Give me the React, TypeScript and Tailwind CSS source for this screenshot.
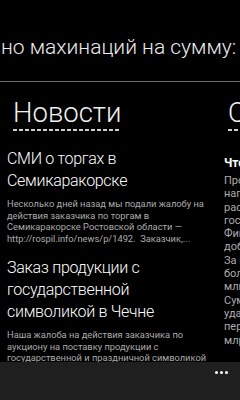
import React from "react";

const leftBody1 = [
  "Несколько дней назад мы подали жалобу на",
  "действия заказчика по торгам в",
  "Семикаракорске Ростовской области —",
  "http://rospil.info/news/p/1492.  Заказчик,...",
];
const leftBody2 = [
  "Наша жалоба на действия заказчика по",
  "аукциону на поставку продукции с",
  "государственной и праздничной символикой",
];
const rightLines = [
  "Прокуратура",
  "направила",
  "расходов",
  "государственных",
  "Финансов",
  "добились",
  "За последние",
  "более",
  "млн",
  "Сумма",
  "удалось",
  "перечислено",
  "млрд",
];

export default function App() {
  return (
    <div
      className="relative w-[240px] h-[400px] overflow-hidden bg-black text-white"
      style={{ fontFamily: 'Roboto, "Open Sans", sans-serif' }}
    >
      <div className="h-[81px] pt-[33px]">
        <div className="whitespace-nowrap text-[21px] leading-[28px] font-light text-[#ececec] ml-[1px]">
          но махинаций на сумму:
        </div>
      </div>
      <div className="h-px bg-[#6e6e6e]" />
      <div className="flex">
        <div className="w-[224px] shrink-0">
          <div className="ml-[13px] mt-[17px] w-max">
            <div className="text-[27.5px] leading-[28px] font-light text-[#f0f0f0]">
              Новости
            </div>
            <div className="h-[2px] mt-[2px] bg-[repeating-linear-gradient(90deg,#cfcfcf_0_4px,transparent_4px_6px)]" />
          </div>
          <div className="ml-[7px] mt-[17px]">
            <div className="text-[16px] leading-[22px] font-light tracking-[-0.3px] text-white">
              <div className="whitespace-nowrap">СМИ о торгах в</div>
              <div className="whitespace-nowrap">Семикаракорске</div>
            </div>
            <div className="mt-[6px] text-[9.3px] leading-[11.7px] text-[#acacac]">
              {leftBody1.map((l, i) => (
                <div key={i} className="whitespace-pre">
                  {l}
                </div>
              ))}
            </div>
            <div className="mt-[12px] text-[16px] leading-[22px] font-light tracking-[-0.3px] text-white">
              <div className="whitespace-nowrap">Заказ продукции с</div>
              <div className="whitespace-nowrap">государственной</div>
              <div className="whitespace-nowrap">символикой в Чечне</div>
            </div>
            <div className="mt-[6px] text-[9.3px] leading-[11.7px] text-[#acacac]">
              {leftBody2.map((l, i) => (
                <div key={i} className="whitespace-nowrap">
                  {l}
                </div>
              ))}
            </div>
          </div>
        </div>
        <div className="shrink-0">
          <div className="ml-[4px] mt-[17px] w-max">
            <div className="text-[27.5px] leading-[28px] font-light text-[#f0f0f0]">
              Ошибки
            </div>
            <div className="h-[2px] mt-[2px] bg-[repeating-linear-gradient(90deg,#cfcfcf_0_4px,transparent_4px_6px)]" />
          </div>
          <div className="mt-[25px] whitespace-nowrap text-[12px] leading-[15px] font-bold text-white">
            Что сделано
          </div>
          <div className="mt-[3px] text-[11px] leading-[13.3px] text-[#acacac]">
            {rightLines.map((l, i) => (
              <div key={i} className="whitespace-nowrap">
                {l}
              </div>
            ))}
          </div>
        </div>
      </div>
      <div className="absolute left-0 right-0 bottom-0 h-[38px] bg-[#1f1f1f]">
        <div className="absolute right-[12px] top-[9px] flex gap-[2px]">
          <span className="block w-[3px] h-[3px] rounded-full bg-white" />
          <span className="block w-[3px] h-[3px] rounded-full bg-white" />
          <span className="block w-[3px] h-[3px] rounded-full bg-white" />
        </div>
      </div>
    </div>
  );
}
